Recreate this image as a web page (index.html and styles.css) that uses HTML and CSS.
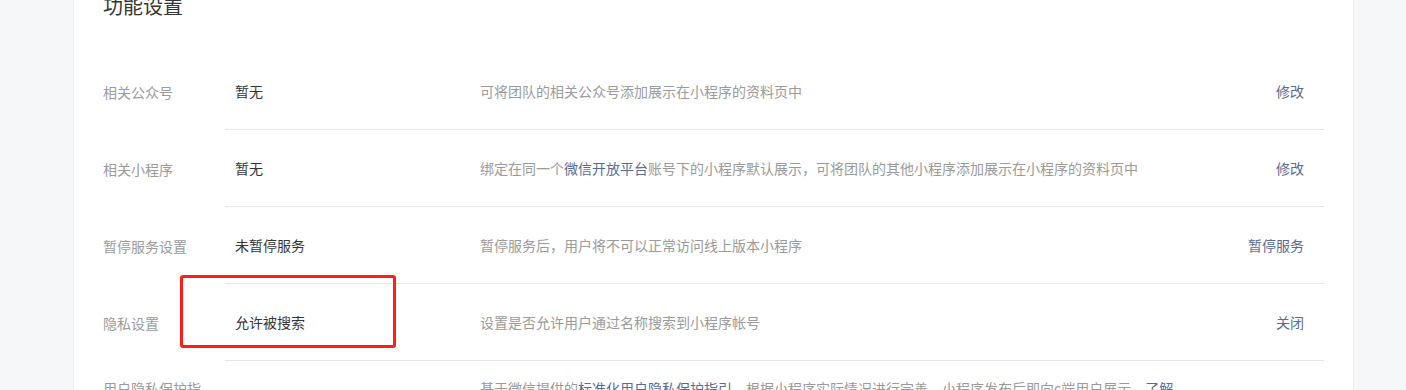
FILE: index.html
```html
<!DOCTYPE html>
<html lang="zh-CN">
<head>
<meta charset="utf-8">
<title>功能设置</title>
<link rel="stylesheet" href="styles.css">
</head>
<body>
<div class="page">
  <section class="card">
    <h2 class="card-title">功能设置</h2>
    <div class="settings">
      <div class="row">
        <div class="label">相关公众号</div>
        <div class="body">
          <div class="value">暂无</div>
          <div class="desc">可将团队的相关公众号添加展示在小程序的资料页中</div>
          <a class="action" href="#">修改</a>
        </div>
      </div>
      <div class="row">
        <div class="label">相关小程序</div>
        <div class="body">
          <div class="value">暂无</div>
          <div class="desc">绑定在同一个<a class="link" href="#">微信开放平台</a>账号下的小程序默认展示，可将团队的其他小程序添加展示在小程序的资料页中</div>
          <a class="action" href="#">修改</a>
        </div>
      </div>
      <div class="row">
        <div class="label">暂停服务设置</div>
        <div class="body">
          <div class="value">未暂停服务</div>
          <div class="desc">暂停服务后，用户将不可以正常访问线上版本小程序</div>
          <a class="action" href="#">暂停服务</a>
        </div>
      </div>
      <div class="row row-marked">
        <div class="label">隐私设置</div>
        <div class="body">
          <div class="value">允许被搜索</div>
          <div class="desc">设置是否允许用户通过名称搜索到小程序帐号</div>
          <a class="action" href="#">关闭</a>
        </div>
        <div class="highlight-box"></div>
      </div>
      <div class="row row-tall">
        <div class="label">用户隐私保护指引</div>
        <div class="body">
          <div class="value"></div>
          <div class="desc">基于微信提供的<a class="link" href="#">标准化用户隐私保护指引</a>，根据小程序实际情况进行完善，小程序发布后即向c端用户展示。<a class="link" href="#">了解<br>更多</a></div>
        </div>
      </div>
    </div>
  </section>
</div>
</body>
</html>
```

FILE: styles.css
```css
html, body {
  margin: 0;
  padding: 0;
  overflow: hidden;
  height: 390px;
}
body {
  background: #f6f7f9;
  font-family: "Noto Sans CJK SC", "Liberation Sans", sans-serif;
  font-size: 14px;
  color: #353535;
}
.page {
  width: 1406px;
}
.card {
  box-sizing: border-box;
  width: 1281px;
  margin-left: 73px;
  margin-top: -8px;
  background: #ffffff;
  border-left: 1px solid #eceef1;
  border-right: 1px solid #eceef1;
  padding: 0 29px 0 29px;
  min-height: 460px;
}
.card-title {
  margin: 0;
  font-size: 20px;
  font-weight: 400;
  line-height: 28px;
  color: #353535;
}
.settings {
  margin-top: 33px;
}
.row {
  display: flex;
  position: relative;
}
.label {
  width: 122px;
  flex: none;
  color: #9a9a9a;
  line-height: 22px;
  display: flex;
  align-items: center;
  box-sizing: border-box;
  padding-right: 14px;
}
.body {
  flex: 1;
  display: flex;
  align-items: center;
  height: 76px;
  border-bottom: 1px solid #e7e7eb;
  padding-left: 10px;
  padding-right: 20px;
  line-height: 22px;
}
.value {
  width: 245px;
  flex: none;
  color: #353535;
}
.desc {
  flex: 1;
  color: #9a9a9a;
}
.link {
  color: #576b95;
  text-decoration: none;
}
.action {
  flex: none;
  color: #576b95;
  text-decoration: none;
  margin-left: 20px;
}
.row-tall .label {
  align-items: flex-start;
  padding-top: 16px;
}
.row-tall .body {
  align-items: flex-start;
  height: auto;
  padding-top: 16px;
  padding-bottom: 16px;
}
.highlight-box {
  position: absolute;
  left: 77px;
  top: -9px;
  width: 216px;
  height: 73px;
  box-sizing: border-box;
  border: 3px solid #ff1f1a;
  border-radius: 3px;
  pointer-events: none;
}
```
